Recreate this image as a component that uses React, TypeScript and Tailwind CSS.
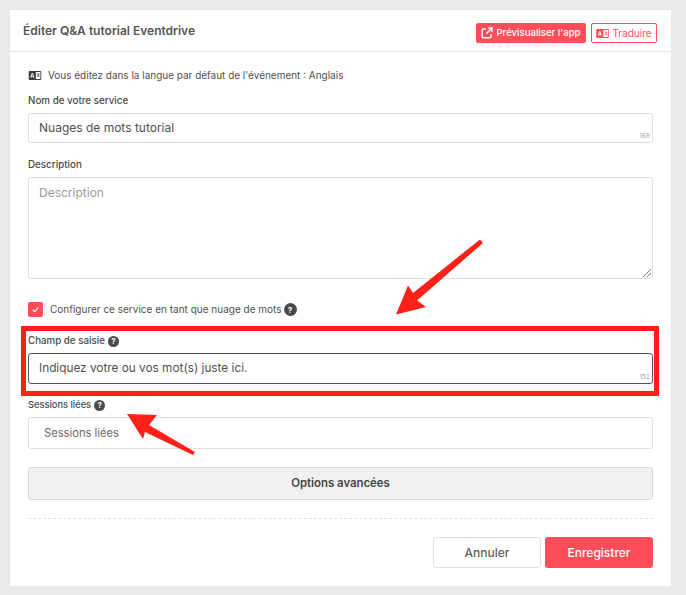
import React from "react";

const font = { fontFamily: '"Inter", "Open Sans", sans-serif' };

function Translate({ className = "" }: { className?: string }) {
  return (
    <svg viewBox="0 0 14 10" className={className} aria-hidden="true">
      <path fillRule="evenodd" fill="currentColor" d="M1 0h12a1 1 0 0 1 1 1v8a1 1 0 0 1-1 1H1a1 1 0 0 1-1-1V1a1 1 0 0 1 1-1Zm7 1v8h5V1H8ZM3.300 2.600 1.800 7.400h1l.3-1h1.800l.3 1h1L4.700 2.600H3.300Zm.7 1 .6 2H3.400l.6-2Z" />
      <path fill="none" stroke="currentColor" strokeWidth="0.8" d="M9 3.400h3M10.500 2.800v.6M11.600 3.400c-.3 1.400-1.200 2.400-2.400 3M9.800 4.600c.4.8 1.200 1.500 2.400 1.800" />
    </svg>
  );
}

function Help({ size = "w-[11px] h-[11px]" }: { size?: string }) {
  return (
    <span className={`${size} inline-flex shrink-0 items-center justify-center rounded-full bg-[#4a4a4a] text-[8px] font-bold leading-none text-white`}>?</span>
  );
}

function Label({ children, className = "text-[9.800px]" }: { children: React.ReactNode; className?: string }) {
  return <div className={`flex h-[16px] items-center gap-[3px] pt-[2px] font-medium leading-none text-[#4a4a4a] ${className}`}>{children}</div>;
}

function Counter({ children }: { children: React.ReactNode }) {
  return <span className="absolute bottom-[1px] right-[2px] text-[6.500px] leading-[9px] text-[#a5a5a5]">{children}</span>;
}

export default function App() {
  return (
    <div style={font} className="relative h-[595px] w-[686px] overflow-hidden bg-[#e9e9e9] px-[10px] pt-[9px]">
      <div className="h-[577px] w-[661px] border-t border-t-[#e3e6e9] bg-white">
        <header className="flex h-[42px] items-center justify-between border-b border-[#e6e6e6] pl-[13px] pr-[14px]">
          <h1 className="text-[12px] font-semibold text-[#555555]">Éditer Q&amp;A tutorial Eventdrive</h1>
          <div className="mt-[5px] flex items-center gap-[5px]">
            <button className="flex h-[20px] w-[110px] items-center justify-center gap-[3px] rounded-[2px] bg-[#ff4d5a] text-[9.600px] font-medium text-white">
              <svg viewBox="0 0 12 12" className="h-[12px] w-[12px]" fill="none" stroke="currentColor" strokeWidth="1.400" aria-hidden="true">
                <path d="M5 2H2.200A1 1 0 0 0 1.200 3v6.800a1 1 0 0 0 1 1H9a1 1 0 0 0 1-1V7" />
                <path d="M7 1h4v4M11 1 5.500 6.500" />
              </svg>
              Prévisualiser l'app
            </button>
            <button className="flex h-[20px] w-[66px] items-center justify-center gap-[3px] rounded-[2px] border border-[#ff4d5a] bg-white text-[10px] text-[#ff4d5a]">
              <Translate className="h-[9px] w-[13px]" />
              Traduire
            </button>
          </div>
        </header>

        <div className="px-[18px]">
          <div className="mt-[17px] flex h-[12px] items-center gap-[6px] text-[9.980px] text-[#4f4f4f]">
            <Translate className="h-[9px] w-[14px] text-[#3f3f3f]" />
            Vous éditez dans la langue par défaut de l'événement : Anglais
          </div>

          <div className="mt-[11px]"><Label>Nom de votre service</Label></div>
          <div className="relative mt-[5px] flex h-[30px] items-center rounded-[3px] border border-[#e0e0e0] px-[10px] text-[12px] text-[#4f4f4f]">
            Nuages de mots tutorial
            <Counter>168</Counter>
          </div>

          <div className="mt-[13px]"><Label>Description</Label></div>
          <div className="relative mt-[5px] h-[102px] rounded-[3px] border border-[#e0e0e0] px-[10px] pt-[6px] text-[12px] text-[#9a9a9a]">
            Description
            <svg viewBox="0 0 8 8" className="absolute bottom-[1px] right-[1px] h-[8px] w-[8px]" stroke="#555" strokeWidth="0.8" aria-hidden="true">
              <path d="M0 8 8 0M4 8l4-4" />
            </svg>
          </div>

          <div className="mt-[23px] flex h-[15px] items-center">
            <span className="flex h-[15px] w-[15px] items-center justify-center rounded-[2px] bg-[#ff4d5a]">
              <svg viewBox="0 0 10 10" className="h-[9px] w-[9px]" fill="none" stroke="white" strokeWidth="1.400" aria-hidden="true">
                <path d="m2 5.200 2.200 2.200L8 3" />
              </svg>
            </span>
            <span className="ml-[7px] text-[10px] text-[#4f4f4f]">Configurer ce service en tant que nuage de mots</span>
            <span className="ml-[2px] inline-flex"><Help size="w-[13px] h-[13px]" /></span>
          </div>

          <div className="mt-[15px]"><Label className="text-[9.750px]">Champ de saisie <Help /></Label></div>
          <div className="relative mt-[5px] flex h-[31px] items-center rounded-[3px] border border-[#555555] px-[10px] text-[11.800px] text-[#4f4f4f]">
            Indiquez votre ou vos mot(s) juste ici.
            <Counter>152</Counter>
          </div>

          <div className="mt-[12px]"><Label className="text-[9.300px]">Sessions liées <Help /></Label></div>
          <div className="mt-[5px] flex h-[32px] items-center rounded-[3px] border border-[#e0e0e0] px-[15px] pt-[1px] text-[11.200px] text-[#6a6a6a]">
            Sessions liées
          </div>

          <button className="mt-[18px] flex h-[33px] w-full items-center justify-center rounded-[3px] border border-[#d8d8d8] bg-[#f1f1f1] text-[11.400px] font-semibold text-[#444444]">
            Options avancées
          </button>

          <div className="mt-[18px] border-t border-dashed border-[#e2e2e2]" />

          <div className="mt-[18px] flex justify-end gap-[4px]">
            <button className="h-[31px] w-[108px] rounded-[3px] border border-[#e0e0e0] bg-white text-[12px] font-medium text-[#5f5f5f]">Annuler</button>
            <button className="h-[31px] w-[108px] rounded-[3px] bg-[#ff4d5a] text-[12px] font-medium text-white">Enregistrer</button>
          </div>
        </div>
      </div>

      <div className="absolute left-[21px] top-[326px] h-[70px] w-[638px] border-[5px] border-[#ff2018]" />
      <svg viewBox="0 0 686 595" className="pointer-events-none absolute left-0 top-0 h-[595px] w-[686px]" aria-hidden="true">
        <path fill="#ff2018" d="M480 239.500 483 243 417 300.500 426 307 396 314.500 408 285.500 413 293Z" />
        <path fill="#ff2018" d="M127 414 157 415 149 425 195 452 193 455 145 432 143 439Z" />
      </svg>
    </div>
  );
}
